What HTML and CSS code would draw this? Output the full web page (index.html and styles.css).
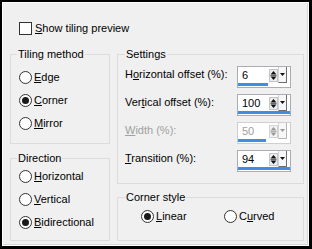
FILE: index.html
```html
<!DOCTYPE html>
<html lang="en">
<head>
<meta charset="utf-8">
<title>Tiling</title>
<link rel="stylesheet" href="styles.css">
</head>
<body>
<div class="dialog">
  <div class="check-row"><span class="checkbox"></span><span class="lbl"><u>S</u>how tiling preview</span></div>
  <div class="columns">
    <div class="col col-left">
      <fieldset class="group">
        <legend>Tiling method</legend>
        <div class="tiling-body">
          <div class="opt"><span class="radio"></span><span class="lbl"><u>E</u>dge</span></div>
          <div class="opt"><span class="radio on"></span><span class="lbl"><u>C</u>orner</span></div>
          <div class="opt"><span class="radio"></span><span class="lbl"><u>M</u>irror</span></div>
        </div>
      </fieldset>
      <fieldset class="group">
        <legend>Direction</legend>
        <div class="dir-body">
          <div class="opt"><span class="radio"></span><span class="lbl"><u>H</u>orizontal</span></div>
          <div class="opt"><span class="radio"></span><span class="lbl"><u>V</u>ertical</span></div>
          <div class="opt"><span class="radio on"></span><span class="lbl"><u>B</u>idirectional</span></div>
        </div>
      </fieldset>
    </div>
    <div class="col col-right">
      <fieldset class="group">
        <legend>Settings</legend>
        <div class="settings-body">
          <div class="field">
            <span class="field-label">H<u>o</u>rizontal offset (%):</span>
            <div class="spin">
              <span class="spin-val">6</span>
              <svg class="spin-arrows" width="9" height="13" viewBox="0 0 9 13"><rect x="0.5" y="0.5" width="8" height="12" fill="#ececec" stroke="#c4c4c4"/><path d="M4.5 2L7.5 5.5H1.5z" fill="#111"/><path d="M1.5 6.5h6" stroke="#6a6a6a"/><path d="M1.5 7.5h6L4.5 11z" fill="#111"/></svg>
              <span class="spin-drop"><svg width="5" height="3" viewBox="0 0 5 3"><path d="M0 0h5L2.5 3z" fill="#111"/></svg></span>
              <span class="spin-bar" style="width:30px"></span>
            </div>
          </div>
          <div class="field">
            <span class="field-label">Ver<u>t</u>ical offset (%):</span>
            <div class="spin">
              <span class="spin-val">100</span>
              <svg class="spin-arrows" width="9" height="13" viewBox="0 0 9 13"><rect x="0.5" y="0.5" width="8" height="12" fill="#ececec" stroke="#c4c4c4"/><path d="M4.5 2L7.5 5.5H1.5z" fill="#111"/><path d="M1.5 6.5h6" stroke="#6a6a6a"/><path d="M1.5 7.5h6L4.5 11z" fill="#111"/></svg>
              <span class="spin-drop"><svg width="5" height="3" viewBox="0 0 5 3"><path d="M0 0h5L2.5 3z" fill="#111"/></svg></span>
              <span class="spin-bar" style="width:52px"></span>
            </div>
          </div>
          <div class="field disabled">
            <span class="field-label"><u>W</u>idth (%):</span>
            <div class="spin">
              <span class="spin-val">50</span>
              <svg class="spin-arrows" width="9" height="13" viewBox="0 0 9 13"><rect x="0.5" y="0.5" width="8" height="12" fill="#f2f2f2" stroke="#d4d4d4"/><path d="M4.5 2L7.5 5.5H1.5z" fill="#9a9a9a"/><path d="M1.5 6.5h6" stroke="#b0b0b0"/><path d="M1.5 7.5h6L4.5 11z" fill="#9a9a9a"/></svg>
              <span class="spin-drop"><svg width="5" height="3" viewBox="0 0 5 3"><path d="M0 0h5L2.5 3z" fill="#9a9a9a"/></svg></span>
              <span class="spin-bar" style="width:28px"></span>
            </div>
          </div>
          <div class="field">
            <span class="field-label"><u>T</u>ransition (%):</span>
            <div class="spin">
              <span class="spin-val">94</span>
              <svg class="spin-arrows" width="9" height="13" viewBox="0 0 9 13"><rect x="0.5" y="0.5" width="8" height="12" fill="#ececec" stroke="#c4c4c4"/><path d="M4.5 2L7.5 5.5H1.5z" fill="#111"/><path d="M1.5 6.5h6" stroke="#6a6a6a"/><path d="M1.5 7.5h6L4.5 11z" fill="#111"/></svg>
              <span class="spin-drop"><svg width="5" height="3" viewBox="0 0 5 3"><path d="M0 0h5L2.5 3z" fill="#111"/></svg></span>
              <span class="spin-bar" style="width:52px"></span>
            </div>
          </div>
        </div>
      </fieldset>
      <fieldset class="group">
        <legend>Corner style</legend>
        <div class="corner-body">
          <div class="opt"><span class="radio on"></span><span class="lbl"><u>L</u>inear</span></div>
          <div class="opt"><span class="radio"></span><span class="lbl">C<u>u</u>rved</span></div>
        </div>
      </fieldset>
    </div>
  </div>
</div>
</body>
</html>
```

FILE: styles.css
```css
* { box-sizing: border-box; }
html, body { margin: 0; padding: 0; }
body {
  font-family: "Liberation Sans", Arial, sans-serif;
  font-size: 11px;
  line-height: 13px;
  color: #000;
  background: #fff;
}
u { text-decoration: underline; text-underline-offset: 1px; }

.dialog {
  width: 312px;
  height: 249px;
  border-style: solid;
  border-color: #000;
  border-width: 2px 3px 3px 2px;
  background: #f0f0f0;
  box-shadow: inset 1px 1px 0 #fff, inset -1px -1px 0 #fff, inset -2px -2px 0 #d8d8d8;
  padding: 20px 0 0 8px;
}

.check-row {
  display: flex;
  align-items: center;
  height: 13px;
  margin-left: 9px;
  gap: 3px;
}
.checkbox {
  width: 13px;
  height: 13px;
  border: 1px solid #333;
  background: #fff;
  flex: none;
}

.columns {
  display: flex;
  gap: 7px;
  margin-top: 13px;
}
.col { display: flex; flex-direction: column; }
.col-left { width: 100px; gap: 8px; }
.col-right { width: 187px; gap: 7px; }

.group {
  margin: 0;
  padding: 0;
  min-width: 0;
  border: 1px solid #dcdcdc;
}
.group legend {
  padding: 0 1px;
  margin-left: 6px;
  line-height: 13px;
}
.col-right .group legend { margin-left: 7px; }

.tiling-body { padding: 5px 0 8px 8px; }
.dir-body { padding: 0 0 6px 8px; }

.opt {
  display: flex;
  align-items: center;
  gap: 2px;
  height: 23px;
}
.radio {
  width: 13px;
  height: 13px;
  border-radius: 50%;
  border: 1px solid #333;
  background: #fff;
  display: flex;
  align-items: center;
  justify-content: center;
  flex: none;
}
.radio.on::after {
  content: "";
  width: 7px;
  height: 7px;
  border-radius: 50%;
  background: #1a1a1a;
}

.settings-body {
  padding: 5px 0 11px 7px;
  display: grid;
  row-gap: 6px;
}
.field {
  display: grid;
  grid-template-columns: 112px 54px;
  height: 22px;
}
.field-label { padding-top: 2px; }
.field.disabled { color: #a0a0a0; }

.spin {
  height: 22px;
  border: 1px solid #abadb3;
  background: #fff;
  display: grid;
  grid-template-columns: 31px 9px 9px 3px;
  grid-template-rows: 16px 4px;
}
.field.disabled .spin { border-color: #cfcfcf; }
.spin-val { padding-left: 4px; align-self: center; }
.spin-arrows { align-self: center; }
.spin-drop {
  border-left: 1px solid #d4d4d4;
  border-right: 1px solid #6d6d6d;
  border-bottom: 1px solid #6d6d6d;
  background: #f7f7f7;
  display: flex;
  align-items: center;
  justify-content: center;
}
.field.disabled .spin-drop { border-right-color: #b5b5b5; border-bottom-color: #b5b5b5; }
.spin-bar {
  grid-column: 1 / -1;
  height: 3px;
  background: #3d8ee4;
  align-self: start;
}

.corner-body {
  padding: 6px 0 17px 23px;
  display: flex;
}
.corner-body .opt { height: 13px; }
.corner-body .opt:first-child { width: 83px; }
```
